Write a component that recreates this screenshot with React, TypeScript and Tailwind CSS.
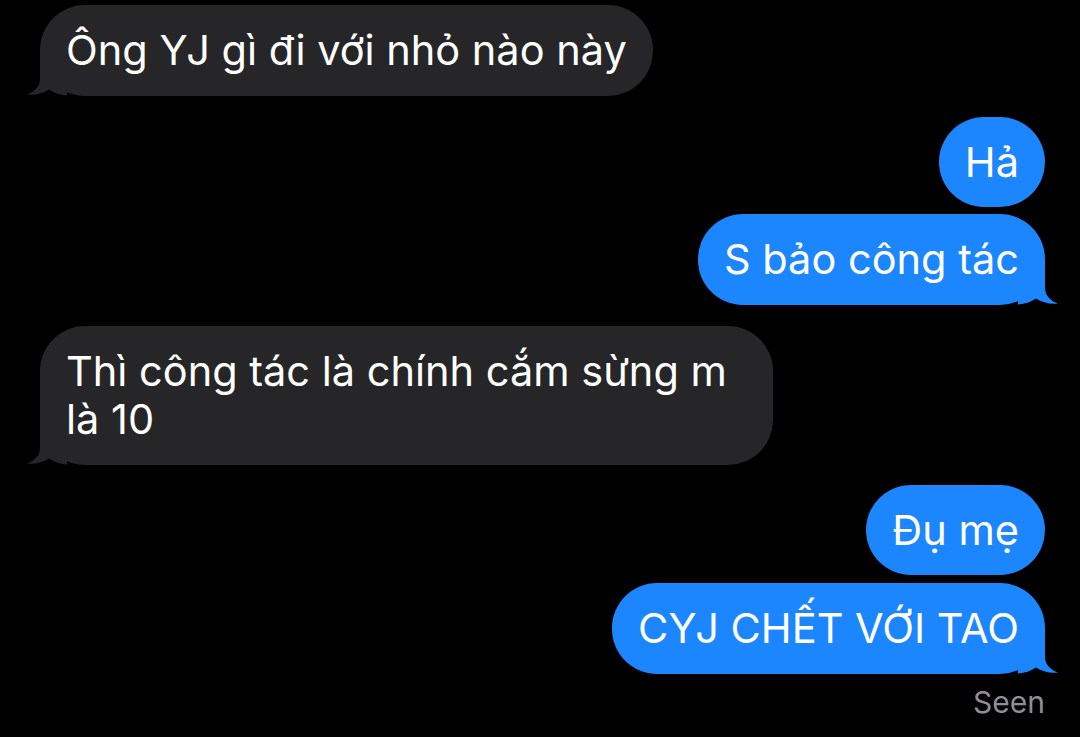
import React from 'react';

type Msg = { text: string; mine: boolean; tail: boolean; gap: string };

const messages: Msg[] = [
    { text: 'Ông YJ gì đi với nhỏ nào này', mine: false, tail: true, gap: 'mt-[5px]' },
    { text: 'Hả', mine: true, tail: false, gap: 'mt-[21px]' },
    { text: 'S bảo công tác', mine: true, tail: true, gap: 'mt-[7px]' },
    { text: 'Thì công tác là chính cắm sừng m là 10', mine: false, tail: true, gap: 'mt-[21px]' },
    { text: 'Đụ mẹ', mine: true, tail: false, gap: 'mt-[20px]' },
    { text: 'CYJ CHẾT VỚI TAO', mine: true, tail: true, gap: 'mt-[8px]' },
];

function Tail({ mine }: { mine: boolean }) {
    return (
        <svg
            width="40"
            height="45"
            viewBox="0 0 40 45"
            className={mine ? 'absolute -right-[13px] bottom-0 -scale-x-100' : 'absolute -left-[13px] bottom-0'}
        >
            <path
                d="M13,0 L13,28 C13,36 7,41 0,43.5 C8,44.5 16,42.5 22,38.5 C27,42 33,44 40,44.5 L40,0 Z"
                fill={mine ? '#1b86fd' : '#262628'}
            />
        </svg>
    );
}

function Bubble({ msg }: { msg: Msg }) {
    return (
        <div className={`flex ${msg.mine ? 'justify-end' : 'justify-start'} ${msg.gap}`}>
            <div
                className={`relative max-w-[733px] rounded-[45px] px-[26px] py-[21px] text-[41.5px] leading-[48.5px] text-white ${
                    msg.mine ? 'bg-[#1b86fd]' : 'bg-[#262628]'
                }`}
            >
                {msg.tail && <Tail mine={msg.mine} />}
                <span className="relative">{msg.text}</span>
            </div>
        </div>
    );
}

export default function App() {
    return (
        <div className="w-[1080px] h-[737px] overflow-hidden bg-black pl-[40px] pr-[35px] font-['Inter',sans-serif]">
            {messages.map((m, i) => (
                <Bubble key={i} msg={m} />
            ))}
            <div className="mt-[8px] text-right text-[30px] leading-[40px] text-[#8e8e93]">Seen</div>
        </div>
    );
}
